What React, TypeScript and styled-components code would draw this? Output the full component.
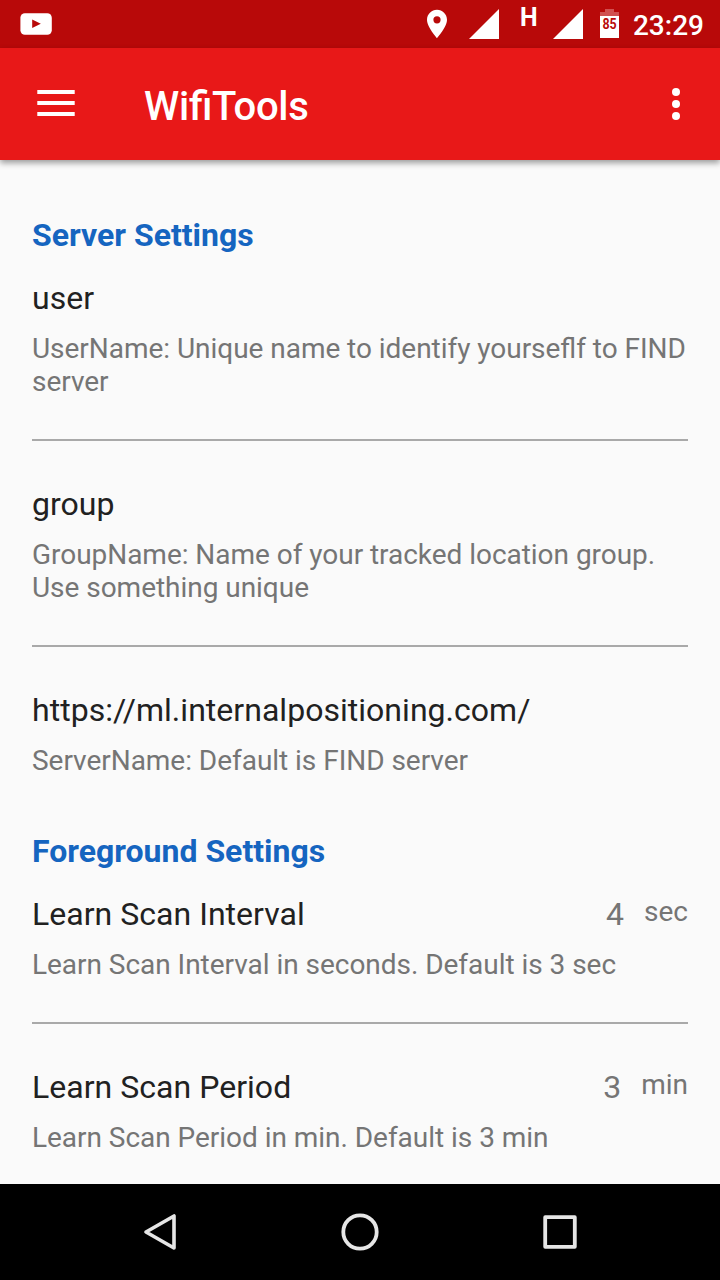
import React from 'react';
import styled, { createGlobalStyle } from 'styled-components';

const GlobalStyle = createGlobalStyle`
  * { box-sizing: border-box; }
  body { margin: 0; background: #fafafa; font-family: Roboto, "Liberation Sans", sans-serif; }
  svg { display: block; flex: none; }
`;

const Screen = styled.div`
  width: 720px;
  height: 1280px;
  display: flex;
  flex-direction: column;
  overflow: hidden;
  background: #fafafa;
`;

const StatusBar = styled.div`
  flex: none;
  height: 48px;
  padding: 0 16px 0 20px;
  display: flex;
  align-items: flex-start;
  justify-content: space-between;
  background: #b80909;
  color: #fff;
`;

const StatusIcons = styled.div`
  display: flex;
  align-items: flex-start;
`;

const Battery = styled.div`
  position: relative;
  width: 19px;
  margin: 9px 14px 0 17px;
`;

const BatteryLevel = styled.span`
  position: absolute;
  left: 0;
  top: 6px;
  width: 19px;
  display: flex;
  justify-content: center;
  font-size: 15.5px;
  line-height: 18px;
  font-weight: 700;
  color: #b80909;
  transform: scaleX(0.8);
`;

const NetworkType = styled.span`
  width: 19px;
  margin: 5px 14px 0 21px;
  font-size: 25px;
  line-height: 26px;
  font-weight: 700;
`;

const Clock = styled.span`
  margin-top: 9px;
  font-size: 28px;
  line-height: 33px;
  font-weight: 500;
`;

const AppBar = styled.header`
  flex: none;
  position: relative;
  height: 112px;
  padding: 0 40px 0 37px;
  display: flex;
  align-items: center;
  background: #e81818;
  color: #fff;
  box-shadow: 0 3px 6px rgba(0, 0, 0, 0.38);
`;

const AppTitle = styled.h1`
  flex: 1;
  margin: 5px 0 0 69px;
  font-size: 40px;
  line-height: 47px;
  font-weight: 500;
  letter-spacing: -0.25px;
  font-feature-settings: "liga" 1;
`;

const Content = styled.main`
  flex: 1;
  min-height: 0;
  padding: 56px 32px 0;
  display: flex;
  flex-direction: column;
  gap: 55px;
  overflow: hidden;
`;

const SectionTitle = styled.h2`
  margin: 0 0 25px;
  font-size: 32px;
  line-height: 38px;
  font-weight: 700;
  color: #1565c0;
`;

const Item = styled.div`
  & + & {
    margin-top: 41px;
    padding-top: 44px;
    border-top: 2px solid #a9a9a9;
  }
`;

const ItemHead = styled.div`
  display: flex;
  align-items: flex-start;
  margin-bottom: 15px;
`;

const ItemTitle = styled.span`
  flex: 1;
  font-size: 32px;
  line-height: 38px;
  letter-spacing: 0.03px;
  color: #212121;
`;

const Value = styled.span`
  font-size: 32px;
  line-height: 38px;
  color: #757575;
`;

const Unit = styled.span`
  margin-left: 20px;
  font-size: 28px;
  line-height: 33px;
  color: #757575;
`;

const Description = styled.p`
  margin: 0;
  font-size: 28px;
  line-height: 33px;
  letter-spacing: -0.035px;
  font-feature-settings: "liga" 1;
  color: #757575;
`;

const NavBar = styled.nav`
  flex: none;
  height: 96px;
  padding: 0 140px;
  display: flex;
  align-items: center;
  justify-content: space-between;
  background: #000;
`;

type Setting = { title: string; description: string; value?: string; unit?: string };

const sections: { title: string; items: Setting[] }[] = [
  {
    title: 'Server Settings',
    items: [
      { title: 'user', description: 'UserName: Unique name to identify yourseflf to FIND server' },
      { title: 'group', description: 'GroupName: Name of your tracked location group. Use something unique' },
      { title: 'https://ml.internalpositioning.com/', description: 'ServerName: Default is FIND server' },
    ],
  },
  {
    title: 'Foreground Settings',
    items: [
      { title: 'Learn Scan Interval', description: 'Learn Scan Interval in seconds. Default is 3 sec', value: '4', unit: 'sec' },
      { title: 'Learn Scan Period', description: 'Learn Scan Period in min. Default is 3 min', value: '3', unit: 'min' },
    ],
  },
];

const VideoIcon = () => (
  <svg width="32" height="48" viewBox="0 0 32 48">
    <rect x="0.4" y="13.2" width="31.4" height="21.6" rx="4.5" fill="#fff" />
    <path d="M12.2 19.5v8.6l8.6-4.3z" fill="#b80909" />
  </svg>
);

const PinIcon = () => (
  <svg width="20" height="48" viewBox="0 0 20 48">
    <path
      fillRule="evenodd"
      d="M10 9.8C4.5 9.8 0 14.2 0 19.8 0 27.2 10 38.2 10 38.2s10-11 10-18.4C20 14.2 15.5 9.8 10 9.8zm0 13.6a3.6 3.6 0 1 1 0-7.2 3.6 3.6 0 0 1 0 7.2z"
      fill="#fff"
    />
  </svg>
);

const SignalIcon = () => (
  <svg width="30" height="48" viewBox="0 0 30 48">
    <path d="M30 9v30H0z" fill="#fff" />
  </svg>
);

const Gap = styled.span`
  width: 22px;
`;

export default function App() {
  return (
    <>
      <GlobalStyle />
      <Screen>
        <StatusBar>
          <VideoIcon />
          <StatusIcons>
            <PinIcon />
            <Gap />
            <SignalIcon />
            <NetworkType>H</NetworkType>
            <SignalIcon />
            <Battery>
              <svg width="19" height="29" viewBox="0 0 19 29">
                <path d="M5 0h9v3h5v4H0V3h5z" fill="#d05050" />
                <path d="M0 7h19v22H0z" fill="#fff" />
              </svg>
              <BatteryLevel>85</BatteryLevel>
            </Battery>
            <Clock>23:29</Clock>
          </StatusIcons>
        </StatusBar>
        <AppBar>
          <svg width="38" height="28" viewBox="0 0 38 28">
            <path d="M0.3 0h37.4v4H0.3zM0.3 11h37.4v4H0.3zM0.3 22h37.4v4H0.3z" fill="#fff" />
          </svg>
          <AppTitle>WifiTools</AppTitle>
          <svg width="8" height="32" viewBox="0 0 8 32">
            <circle cx="4" cy="4" r="4" fill="#fff" />
            <circle cx="4" cy="16" r="4" fill="#fff" />
            <circle cx="4" cy="28" r="4" fill="#fff" />
          </svg>
        </AppBar>
        <Content>
          {sections.map((section) => (
            <section key={section.title}>
              <SectionTitle>{section.title}</SectionTitle>
              {section.items.map((item) => (
                <Item key={item.title}>
                  <ItemHead>
                    <ItemTitle>{item.title}</ItemTitle>
                    {item.value && <Value>{item.value}</Value>}
                    {item.unit && <Unit>{item.unit}</Unit>}
                  </ItemHead>
                  <Description>{item.description}</Description>
                </Item>
              ))}
            </section>
          ))}
        </Content>
        <NavBar>
          <svg width="40" height="40" viewBox="0 0 40 40">
            <path d="M34 4v32L6 20z" fill="none" stroke="#e6e6e6" strokeWidth="3.6" strokeLinejoin="round" />
          </svg>
          <svg width="40" height="40" viewBox="0 0 40 40">
            <circle cx="20" cy="20" r="16.7" fill="none" stroke="#e6e6e6" strokeWidth="3.8" />
          </svg>
          <svg width="40" height="40" viewBox="0 0 40 40">
            <rect x="5.2" y="5.2" width="29.6" height="29.6" fill="none" stroke="#e6e6e6" strokeWidth="3.8" strokeLinejoin="round" />
          </svg>
        </NavBar>
      </Screen>
    </>
  );
}
